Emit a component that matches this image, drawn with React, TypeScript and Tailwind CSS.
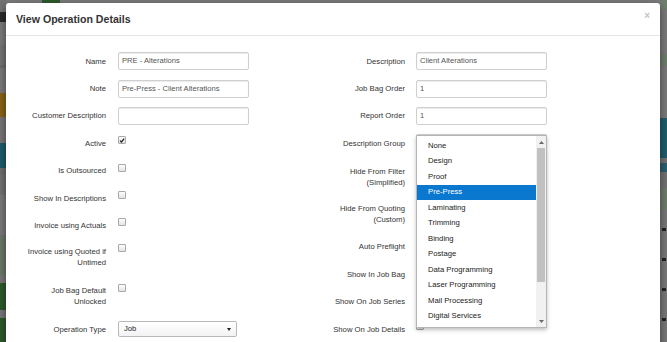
import React from "react";

const font = "font-['Liberation_Sans',Arial,sans-serif]";

function Label({ children, check }: { children: React.ReactNode; check?: boolean }) {
  return (
    <div
      className={`w-[82px] shrink-0 text-right text-[7.7px] leading-[11px] text-[#333] ${
        check ? "pt-[6.5px]" : "pt-[3.5px]"
      }`}
    >
      {children}
    </div>
  );
}

function TextBox({ value }: { value: string }) {
  return (
    <div className="flex h-[18px] w-[131px] items-center rounded-[2px] border border-[#cfcfcf] bg-white pl-[3px] text-[7.6px] text-[#555] shadow-[inset_0_1px_1px_rgba(0,0,0,0.08)]">
      {value}
    </div>
  );
}

function Check({ checked }: { checked?: boolean }) {
  return (
    <div className="mt-[5px] flex h-[8px] w-[8px] items-center justify-center rounded-[1px] border border-[#a9a9a9] bg-linear-to-b from-[#fdfdfd] to-[#e4e4e4]">
      {checked && (
        <svg width="7" height="7" viewBox="0 0 7 7">
          <path d="M1.2 3.6 L2.9 5.3 L5.9 1.3" stroke="#1e1e1e" strokeWidth="1.5" fill="none" />
        </svg>
      )}
    </div>
  );
}

const options = [
  "None",
  "Design",
  "Proof",
  "Pre-Press",
  "Laminating",
  "Trimming",
  "Binding",
  "Postage",
  "Data Programming",
  "Laser Programming",
  "Mail Processing",
  "Digital Services",
];

function Dropdown() {
  return (
    <div className="absolute -left-[1px] top-0 z-10 flex h-[193px] w-[131px] border border-[#b5b5b5] bg-white shadow-[0_2px_4px_rgba(0,0,0,0.25)]">
      <div className="flex-1 pt-[2px]">
        {options.map((o) => (
          <div
            key={o}
            className={`flex h-[15.5px] items-center pl-[11px] text-[7.7px] ${
              o === "Pre-Press" ? "bg-[#0a78cf] text-white" : "text-[#222]"
            }`}
          >
            {o}
          </div>
        ))}
      </div>
      <div className="flex w-[10px] flex-col bg-[#f1f1f1]">
        <div className="flex h-[12px] items-center justify-center">
          <svg width="5" height="3" viewBox="0 0 5 3">
            <path d="M0 3 L2.5 0 L5 3 Z" fill="#6a6a6a" />
          </svg>
        </div>
        <div className="flex flex-1 flex-col px-[1px]">
          <div className="h-[134px] bg-[#c1c1c1]" />
        </div>
        <div className="flex h-[11px] items-center justify-center">
          <svg width="5" height="3" viewBox="0 0 5 3">
            <path d="M0 0 L2.5 3 L5 0 Z" fill="#6a6a6a" />
          </svg>
        </div>
      </div>
    </div>
  );
}

function LeftCol() {
  return (
    <div className="flex w-[299px] shrink-0 flex-col">
      <div className="flex h-[27.5px] items-start gap-[12px]">
        <Label>Name</Label>
        <TextBox value="PRE - Alterations" />
      </div>
      <div className="flex h-[27px] items-start gap-[12px]">
        <Label>Note</Label>
        <TextBox value="Pre-Press - Client Alterations" />
      </div>
      <div className="flex h-[24.5px] items-start gap-[12px]">
        <Label>Customer Description</Label>
        <TextBox value="" />
      </div>
      <div className="flex h-[27.5px] items-start gap-[12px]">
        <Label check>Active</Label>
        <Check checked />
      </div>
      <div className="flex h-[27.5px] items-start gap-[12px]">
        <Label check>Is Outsourced</Label>
        <Check />
      </div>
      <div className="flex h-[27px] items-start gap-[12px]">
        <Label check>Show In Descriptions</Label>
        <Check />
      </div>
      <div className="flex h-[26px] items-start gap-[12px]">
        <Label check>Invoice using Actuals</Label>
        <Check />
      </div>
      <div className="flex h-[39.5px] items-start gap-[12px]">
        <Label check>Invoice using Quoted if Untimed</Label>
        <Check />
      </div>
      <div className="flex h-[41.5px] items-start gap-[12px]">
        <Label check>Job Bag Default Unlocked</Label>
        <Check />
      </div>
      <div className="flex h-[27.4px] items-start gap-[12px]">
        <Label>Operation Type</Label>
        <div className="mt-[1px] flex h-[16px] w-[119px] items-center justify-between rounded-[2px] border border-[#b9b9b9] bg-linear-to-b from-white to-[#f3f3f3] pl-[5px] pr-[5px] text-[7.6px] text-[#222]">
          <span>Job</span>
          <svg width="4" height="3" viewBox="0 0 4 3">
            <path d="M0 0 L2 3 L4 0 Z" fill="#222" />
          </svg>
        </div>
      </div>
    </div>
  );
}

function RightCol() {
  return (
    <div className="flex flex-col">
      <div className="flex h-[27.5px] items-start gap-[11px]">
        <Label>Description</Label>
        <TextBox value="Client Alterations" />
      </div>
      <div className="flex h-[27px] items-start gap-[11px]">
        <Label>Job Bag Order</Label>
        <TextBox value="1" />
      </div>
      <div className="flex h-[27.5px] items-start gap-[11px]">
        <Label>Report Order</Label>
        <TextBox value="1" />
      </div>
      <div className="flex h-[25px] items-start gap-[11px]">
        <Label>Description Group</Label>
        <div className="relative h-[18px] w-[131px] rounded-[2px] border border-[#cfcfcf] bg-white">
          <Dropdown />
        </div>
      </div>
      <div className="flex h-[37.5px] items-start gap-[11px]">
        <Label check>Hide From Filter (Simplified)</Label>
        <Check />
      </div>
      <div className="flex h-[37.5px] items-start gap-[11px]">
        <Label check>Hide From Quoting (Custom)</Label>
        <Check />
      </div>
      <div className="flex h-[28px] items-start gap-[11px]">
        <Label check>Auto Preflight</Label>
        <Check />
      </div>
      <div className="flex h-[27px] items-start gap-[11px]">
        <Label check>Show In Job Bag</Label>
        <Check />
      </div>
      <div className="flex h-[28px] items-start gap-[11px]">
        <Label check>Show On Job Series</Label>
        <Check />
      </div>
      <div className="flex h-[27px] items-start gap-[11px]">
        <Label check>Show On Job Details</Label>
        <Check />
      </div>
    </div>
  );
}

function LeftStrip() {
  return (
    <div className="flex w-[6px] shrink-0 flex-col overflow-hidden">
      <div className="h-[12px] bg-[#737373]" />
      <div className="h-[10px] bg-[#2a2a2a]" />
      <div className="h-[23px] bg-[#7a7a7a]" />
      <div className="h-[20px] bg-[#747474]" />
      <div className="h-[3px] bg-[#6c6c6c]" />
      <div className="h-[25px] bg-[#7a7a7a]" />
      <div className="h-[24px] bg-[#8a6418]" />
      <div className="h-[26px] bg-[#767676]" />
      <div className="h-[25px] bg-[#1f5b6b]" />
      <div className="h-[7px] bg-[#6e6e6e]" />
      <div className="h-[20px] bg-[#727272]" />
      <div className="h-[40px] bg-[#7a7a7a]" />
      <div className="h-[40px] bg-[#6d796b]" />
      <div className="h-[8px] bg-[#777]" />
      <div className="h-[27px] bg-[#2e5a2b]" />
      <div className="h-[8px] bg-[#777]" />
      <div className="h-[24px] bg-[#2e5a2b]" />
    </div>
  );
}

function RightStrip() {
  return (
    <div className="flex w-[7px] shrink-0 flex-col overflow-hidden">
      <div className="h-[10px] bg-[#6f7d6f]" />
      <div className="h-[44px] bg-[#7a7a7a]" />
      <div className="h-[12px] bg-[#6f7d6f]" />
      <div className="h-[52px] bg-[#7a7a7a]" />
      <div className="h-[40px] bg-[#1f5d6c]" />
      <div className="h-[5px] bg-[#737373]" />
      <div className="h-[9px] bg-[#2a6070]" />
      <div className="h-[16px] bg-[#727272]" />
      <div className="h-[22px] bg-[#6f7c6d]" />
      <div className="h-[15px] bg-[#777]" />
      <div className="flex h-[30px] flex-col bg-[#787878] pl-[2px] pt-[3px]">
        <div className="h-[3px] w-[4px] bg-[#222]" />
      </div>
      <div className="flex h-[30px] flex-col bg-[#787878] pl-[2px] pt-[3px]">
        <div className="h-[3px] w-[4px] bg-[#222]" />
      </div>
      <div className="flex h-[30px] flex-col bg-[#787878] pl-[2px] pt-[3px]">
        <div className="h-[3px] w-[4px] bg-[#222]" />
      </div>
      <div className="flex flex-1 flex-col bg-[#787878] pl-[2px] pt-[3px]">
        <div className="h-[3px] w-[4px] bg-[#222]" />
      </div>
    </div>
  );
}

export default function App() {
  return (
    <div className={`relative h-[342px] w-[667px] overflow-hidden bg-[#7b7b7b] ${font}`}>
      <div className="flex h-full">
        <LeftStrip />
        <div className="flex flex-1 flex-col">
          <div className="flex h-[3px]">
            <div className="w-[36px]" />
            <div className="h-[3px] w-[18px] bg-[#2f5a2c]" />
          </div>
          <div className="flex-1 bg-[#7b7b7b]" />
        </div>
        <RightStrip />
      </div>

      <div className="absolute left-[6px] top-[3px] h-[360px] w-[654px] rounded-[3px] bg-white shadow-[0_3px_9px_rgba(0,0,0,0.5)]">
        <div className="flex h-[33px] items-start justify-between border-b border-[#e5e5e5] pl-[10px] pr-[10px]">
          <div className="mt-[10px] text-[10.6px] font-bold leading-[12px] text-[#333]">View Operation Details</div>
          <div className="mt-[8px] text-[10px] font-bold leading-[10px] text-[#c4c4c4]">×</div>
        </div>
        <div className="flex pl-[18px] pt-[16px]">
          <LeftCol />
          <RightCol />
        </div>
      </div>
    </div>
  );
}
